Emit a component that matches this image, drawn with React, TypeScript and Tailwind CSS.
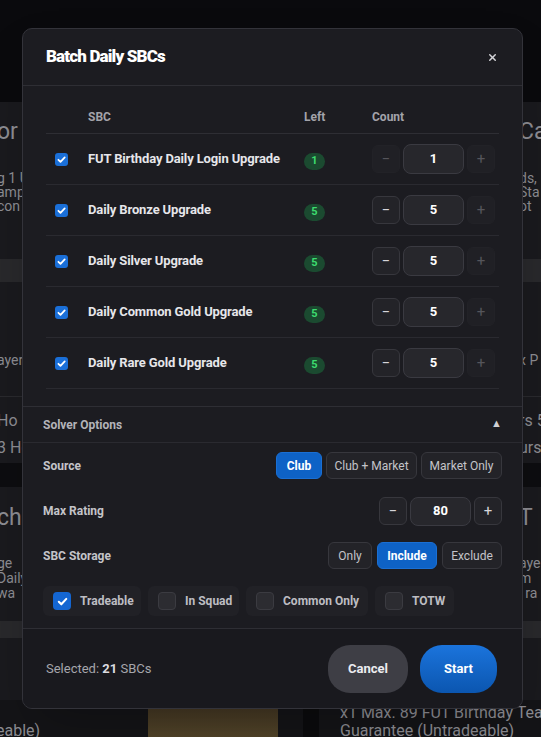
import { useState } from "react";
import { X } from "lucide-react";

type Row = { id: number; name: string; left: number; count: number };

const ROWS: Row[] = [
  { id: 1, name: "FUT Birthday Daily Login Upgrade", left: 1, count: 1 },
  { id: 2, name: "Daily Bronze Upgrade", left: 5, count: 5 },
  { id: 3, name: "Daily Silver Upgrade", left: 5, count: 5 },
  { id: 4, name: "Daily Common Gold Upgrade", left: 5, count: 5 },
  { id: 5, name: "Daily Rare Gold Upgrade", left: 5, count: 5 },
];

const Check = ({ className }: { className?: string }) => (
  <svg viewBox="0 0 12 12" className={className} fill="none">
    <path d="M2.6 6.3l2.3 2.3 4.6-5" stroke="white" strokeWidth="1.9" strokeLinecap="round" strokeLinejoin="round" />
  </svg>
);

// 배경 페이지 카드 (모달 뒤쪽)
const SideColumn = ({ lines, align }: { lines: string[][]; align: "left" | "right" }) => (
  <div className={`flex flex-col overflow-hidden whitespace-nowrap ${align === "left" ? "w-[60px] -ml-[3px]" : "w-[62px] -mr-[40px]"}`}>
    {/* 첫 번째 카드 */}
    <div className="h-[361px] bg-[#1a1a1e] flex flex-col text-[#8e8e94]">
      <div className="mt-[16px] h-[28px] leading-[28px] text-[23px]">{lines[0][0]}</div>
      <div className="mt-[25px] text-[14px] leading-[14px]">{lines[0][1]}</div>
      <div className="text-[14px] leading-[14px]">{lines[0][2]}</div>
      <div className="text-[14px] leading-[14px]">{lines[0][3]}</div>
      <div className="mt-[46px] h-[23px] bg-[#29292c]" />
      <div className="mt-[69px] h-[18px] leading-[18px] text-[14px]">{lines[0][4]}</div>
      <div className="mt-[27px] border-t border-[#2a2a2e]" />
      <div className="mt-[14px] h-[20px] leading-[20px] text-[16px]">{lines[0][5]}</div>
      <div className="mt-[7px] h-[20px] leading-[20px] text-[16px]">{lines[0][6]}</div>
    </div>
    <div className="h-[24px] shrink-0 bg-[#0d0d10]" />
    {/* 두 번째 카드 */}
    <div className="flex-1 bg-[#1a1a1e] flex flex-col text-[#8e8e94]">
      <div className="mt-[17px] h-[28px] leading-[28px] text-[23px]">{lines[1][0]}</div>
      <div className="mt-[24px] text-[14px] leading-[15px]">{lines[1][1]}</div>
      <div className="text-[14px] leading-[15px]">{lines[1][2]}</div>
      <div className="text-[14px] leading-[15px]">{lines[1][3]}</div>
      <div className="mt-[20px] h-[17px] bg-[#29292c]" />
    </div>
  </div>
);

const CounterButton = ({ label, disabled }: { label: string; disabled?: boolean }) => (
  <button
    className={`w-[28px] h-[28px] rounded-md flex items-center justify-center text-[15px] leading-none ${
      disabled ? "bg-[#202025] border border-[#222227] text-[#55555b]" : "bg-[#232328] border border-[#37373d] text-[#d6d6da]"
    }`}
  >
    {label}
  </button>
);

const Segment = ({ label, active, w }: { label: string; active?: boolean; w: string }) => (
  <button
    className={`${w} h-[27px] rounded-md text-[12px] ${
      active ? "bg-[#0e62c6] text-white font-bold border border-[#1a6fd4]" : "bg-[#232328] border border-[#37373d] text-[#c4c4c9]"
    }`}
  >
    {label}
  </button>
);

const Chip = ({ label, checked, w }: { label: string; checked?: boolean; w: string }) => (
  <div className={`${w} h-[30px] rounded-md bg-[#212126] flex items-center gap-[9px] pl-[10px]`}>
    <div
      className={`w-[18px] h-[18px] rounded-[4px] flex items-center justify-center ${
        checked ? "bg-[#1466d2]" : "bg-[#2c2c31] border border-[#3b3b41]"
      }`}
    >
      {checked && <Check className="w-[13px] h-[13px]" />}
    </div>
    <span className="text-[12px] font-bold text-[#bdbdc2]">{label}</span>
  </div>
);

const App = () => {
  const [rows] = useState(ROWS);
  const total = rows.reduce((sum, r) => sum + r.count, 0);

  return (
    <div className="relative w-[541px] h-[737px] overflow-hidden bg-[#0b0b0e] font-['Roboto',sans-serif]">
      {/* 배경 페이지 */}
      <div className="flex flex-col h-full">
        <div className="h-[102px] shrink-0 bg-[#0a0a0d]" />
        <div className="flex justify-between h-[598px] shrink-0">
          <SideColumn
            align="left"
            lines={[
              ["or", "g 1 U", "amp", "con", "ayer", "Ho", "3 Ho"],
              ["cho", "ge", "Daily", "wa"],
            ]}
          />
          <SideColumn
            align="right"
            lines={[
              ["Car", "ds,", "Sta", "ot", "x P", "rs 5", "urs"],
              ["T", "aye", "m", ", ra"],
            ]}
          />
        </div>
        <div className="flex flex-1 bg-[#141417] text-[#8e8e94] text-[16px] leading-[18px]">
          <div className="w-[148px] shrink-0 pt-[22px]">
            <span className="-ml-[4px] block">eable)</span>
          </div>
          <div className="w-[130px] shrink-0 bg-gradient-to-b from-[#3f3320] to-[#54462a]" />
          <div className="w-[25px] shrink-0 bg-[#141417]" />
          <div className="w-[16px] shrink-0 bg-[#0b0b0d]" />
          <div className="flex-1 pl-[21px] pt-[4px] whitespace-nowrap overflow-hidden">
            <div>x1 Max. 89 FUT Birthday Team</div>
            <div>Guarantee (Untradeable)</div>
          </div>
        </div>
      </div>

      {/* 모달 */}
      <div className="absolute left-[22px] top-[28px] w-[501px] h-[681px] rounded-[10px] border border-[#33333a] bg-[#1c1c21] flex flex-col overflow-hidden shadow-2xl">
        {/* 헤더 */}
        <div className="h-[57px] shrink-0 flex items-center justify-between pl-[23px] pr-[24px] border-b border-[#2e2e34]">
          <h2 className="font-black text-[17px] tracking-[-0.05em] text-white">Batch Daily SBCs</h2>
          <X className="w-[11px] h-[11px] text-[#d4d4d8]" strokeWidth={3.2} />
        </div>

        {/* 테이블 */}
        <div className="h-[321px] shrink-0 px-[23px] pt-[14px] border-b border-[#2e2e34]">
          <div className="grid grid-cols-[30px_220px_68px_133px] h-[34px] items-center border-b border-[#2e2e34] text-[12px] font-bold text-[#a3a3aa]">
            <div />
            <div className="pl-3">SBC</div>
            <div className="pl-2">Left</div>
            <div className="pl-2">Count</div>
          </div>
          {rows.map((row) => (
            <div
              key={row.id}
              className="grid grid-cols-[30px_220px_68px_133px] h-[51px] items-center border-b border-[#2a2a30]"
            >
              <div className="flex justify-center">
                <div className="w-[13px] h-[13px] rounded-[3px] bg-[#1a6fd8] flex items-center justify-center">
                  <Check className="w-[11px] h-[11px]" />
                </div>
              </div>
              <div className="pl-3 text-[13px] font-bold tracking-[-0.01em] text-[#e6e6ea] whitespace-nowrap">{row.name}</div>
              <div className="pl-2">
                <span className="inline-flex w-[21px] h-[17px] rounded-full bg-[#1b4a30] items-center justify-center text-[11px] font-bold text-[#3ddc6f]">
                  {row.left}
                </span>
              </div>
              <div className="pl-2 flex items-center gap-[3px]">
                <CounterButton label="−" disabled={row.count <= 1} />
                <div className="w-[61px] h-[30px] rounded-lg bg-[#27272c] border border-[#3a3a41] flex items-center justify-center text-[13px] font-bold text-white">
                  {row.count}
                </div>
                <CounterButton label="+" disabled={row.count >= row.left} />
              </div>
            </div>
          ))}
        </div>

        {/* 솔버 옵션 */}
        <div className="h-[36px] shrink-0 flex items-center justify-between px-5 border-b border-[#2a2a30]">
          <span className="text-[12px] font-bold text-[#b3b3b9]">Solver Options</span>
          <span className="text-[11px] text-[#d0d0d4]">▲</span>
        </div>
        <div className="h-[185px] shrink-0 px-5 pt-[9px] flex flex-col">
          <div className="flex items-center justify-between h-[27px]">
            <span className="text-[12px] font-bold text-[#c4c4c9]">Source</span>
            <div className="flex gap-[4px]">
              <Segment label="Club" active w="w-[46px]" />
              <Segment label="Club + Market" w="w-[91px]" />
              <Segment label="Market Only" w="w-[81px]" />
            </div>
          </div>
          <div className="flex items-center justify-between h-[28px] mt-[18px]">
            <span className="text-[12px] font-bold text-[#c4c4c9]">Max Rating</span>
            <div className="flex items-center gap-[3px]">
              <CounterButton label="−" />
              <div className="w-[61px] h-[29px] rounded-lg bg-[#27272c] border border-[#3a3a41] flex items-center justify-center text-[13px] font-bold text-white">
                80
              </div>
              <CounterButton label="+" />
            </div>
          </div>
          <div className="flex items-center justify-between h-[27px] mt-[17px]">
            <span className="text-[12px] font-bold text-[#c4c4c9]">SBC Storage</span>
            <div className="flex gap-[5px]">
              <Segment label="Only" w="w-[44px]" />
              <Segment label="Include" active w="w-[60px]" />
              <Segment label="Exclude" w="w-[60px]" />
            </div>
          </div>
          <div className="flex gap-[7px] mt-[17px]">
            <Chip label="Tradeable" checked w="w-[98px]" />
            <Chip label="In Squad" w="w-[91px]" />
            <Chip label="Common Only" w="w-[122px]" />
            <Chip label="TOTW" w="w-[79px]" />
          </div>
        </div>

        {/* 푸터 */}
        <div className="flex-1 border-t border-[#2e2e34] bg-[#19191e] flex items-center justify-between pl-[23px] pr-[25px]">
          <span className="text-[13px] text-[#a6a6ac]">
            Selected: <b className="font-bold text-[#dcdce0]">{total}</b> SBCs
          </span>
          <div className="flex gap-[12px]">
            <button className="w-[80px] h-[48px] rounded-[22px] bg-[#3e3e45] text-[13px] font-bold text-[#ececf0]">Cancel</button>
            <button className="w-[77px] h-[48px] rounded-[22px] bg-gradient-to-b from-[#1b74dc] to-[#0b56b0] text-[13px] font-bold text-white">
              Start
            </button>
          </div>
        </div>
      </div>
    </div>
  );
};

export default App;
